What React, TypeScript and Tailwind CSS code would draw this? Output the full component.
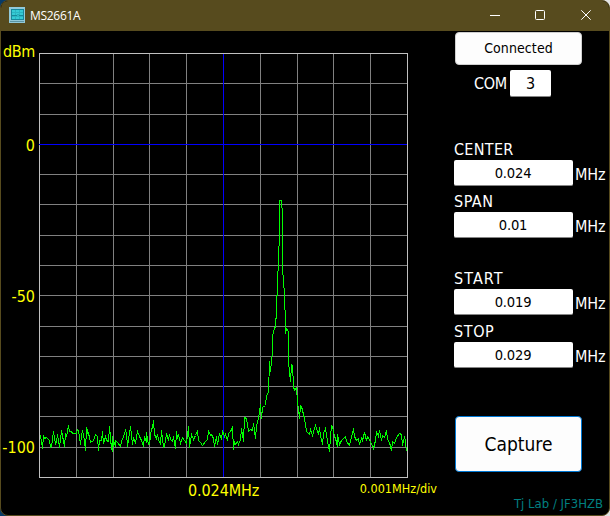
import React from 'react';

const vertical = [76, 113, 149, 186, 260, 297, 333, 370];
const horizontal = [83, 114, 174, 204, 235, 265, 295, 326, 356, 386, 416, 447];

type Segment = { x: number; y: number; data: string };

// Sweep data, in thirds of a pixel from each segment's origin.
const segments: Segment[] = [
  {
    x: 30, y: 400,
    data: '31,107 37,146 41,107 44,115 50,113 57,122 62,142 65,140 71,94 76,133 80,125 83,102 88,142 95,92 102,138 107,100 110,108 116,77 119,95 124,95 127,100 139,100 141,88 145,92 150,133 154,106 157,92 163,120 166,151 170,82 174,107 176,98 182,128 190,122 197,104 203,110 206,151 208,122 214,120 217,95 221,130 227,108 230,122 236,125 239,80 244,148 246,108 248,154 251,122 255,140 257,120 262,128 270,140 275,124 281,108 286,90 290,100 293,138 302,80 306,132 310,115 313,120 317,128 322,94 328,110 333,120 340,140 343,108 348,128 350,98 354,132 359,130 364,85 367,85',
  },
  {
    x: 150, y: 400,
    data: '10,62 14,104 20,115 22,102 26,118 31,132 35,92 41,142 44,140 50,100 54,120 58,104 62,118 67,124 70,110 76,145 79,95 82,115 85,104 91,130 97,112 103,120 110,130 115,80 118,142 124,104 130,118 135,106 141,92 146,120 152,128 158,136 167,124 172,118 176,92 180,106 185,102 190,116 193,140 199,110 202,134 207,100 213,118 217,90 222,110 227,102 231,122 236,100 242,95 246,82',
  },
  {
    x: 230, y: 310,
    data: '11,418 13,394 16,404 22,394 25,402 31,388 35,355 41,395 44,322 50,325 54,365 60,358 66,362 71,340 76,385 80,345 85,325 90,282 95,325 98,292 106,285 110,255 115,248 117,155 122,185 126,122 128,75 134,55 137,50',
  },
  {
    x: 230, y: 190,
    data: '137,386 139,384 139,316 142,315 142,244 145,242 145,168 148,166 149,31 153,31 154,52 157,55 157,254 160,256 160,292 163,295 163,358 166,360',
  },
  {
    x: 230, y: 310,
    data: '167,70 170,55 175,65 176,155 181,215 184,162 187,165 190,228 194,240 198,232 203,275 208,325 211,285 215,290 222,325 230,365 237,372 242,358 246,375 252,355 257,345 261,365 264,372 267,352 271,375 278,402 281,370 287,355 292,395',
  },
  {
    x: 270, y: 400,
    data: '178,155 181,110 185,75 188,78 192,108 195,115 202,140 203,104 208,132 214,122 225,110 228,125 238,136 243,112 250,84 254,108 258,120 264,115 268,132 273,115 278,122 284,98 290,122 293,108 301,125 310,145 316,120 320,95 325,108 329,92 334,122 338,106 344,112 349,92 353,118 359,128 364,150 368,124 374,130 380,112 387,100 394,104 398,135 403,110 407,125 410,155',
  },
];

const trace = segments
  .map(({ x, y, data }) =>
    data
      .split(' ')
      .map((pair) => {
        const [dx, dy] = pair.split(',').map(Number);
        return `${x + Math.floor(dx / 3) + 0.5},${y + Math.floor(dy / 3) + 0.5}`;
      })
      .join(' '),
  )
  .join(' ');

function Plot() {
  return (
    <svg width="369" height="425" viewBox="39 53 369 425" shapeRendering="crispEdges" fill="none" className="block">
      {vertical.map((x) => (
        <path key={x} d={`M${x + 0.5} 53V478`} stroke="#808080" />
      ))}
      {horizontal.map((y) => (
        <path key={y} d={`M39 ${y + 0.5}H408`} stroke="#808080" />
      ))}
      <rect x="39.5" y="53.5" width="368" height="424" stroke="#c0c0c0" />
      <path d="M223.5 54V477M39 144.5H407" stroke="#0000ff" />
      <polyline points={trace} stroke="#00ff00" />
    </svg>
  );
}

function Field({ label, value, tracking }: { label: string; value: string; tracking: string }) {
  return (
    <div>
      <div className={`h-5 text-[16px] leading-5 ${tracking}`}>{label}</div>
      <div className="flex h-[26px] gap-[2px]">
        <div className="h-[26px] w-[119px] rounded-[2px] border-b border-[#868686] bg-white pr-px text-center text-[14.6px] leading-[25px] tracking-[-0.2px] text-black">
          {value}
        </div>
        <div className="pt-[5px] text-[16px] leading-5 tracking-[-0.1px]">MHz</div>
      </div>
    </div>
  );
}

export default function App() {
  return (
    <div className="h-[516px] w-[610px] overflow-hidden bg-[linear-gradient(90deg,#073b68_0_50%,#e4e4e4_50%)]">
      <div className="flex h-[516px] flex-col overflow-hidden rounded-[8px] border border-[#574b1e] bg-black font-['DejaVu_Sans_Condensed','DejaVu_Sans',sans-serif] [font-stretch:condensed] whitespace-nowrap text-white">
        <header className="flex h-[30px] shrink-0 items-start bg-[#574b1e]">
          <svg width="16" height="16" viewBox="0 0 16 16" className="mt-[6px] ml-2">
            <rect width="16" height="16" fill="#91c9d9" />
            <rect x="2" y="2" width="13" height="11" fill="#16899c" />
            <rect x="3" y="3" width="11" height="9" fill="#35cbd5" />
            <path d="M3 5.5H14M3 9.5H14M6.5 3V12M10.5 3V12" stroke="#2bb5c2" />
            <path d="M3 8.5H8L9 7.5L10 8.5H14" stroke="#16899a" fill="none" />
            <path d="M1 14.5H15" stroke="#5b95a5" />
          </svg>
          <div className="mt-[6px] ml-[5px] font-['Open_Sans',sans-serif] text-[12px] leading-[17px] tracking-[-0.3px] [font-stretch:normal]">MS2661A</div>
          <svg width="120" height="30" viewBox="490 1 120 30" className="ml-auto" fill="none" stroke="white">
            <path d="M491 15.5H501" />
            <rect x="536.5" y="10.5" width="9" height="9" rx="1" />
            <path d="M582.3 10.3L591.7 19.7M591.7 10.3L582.3 19.7" />
          </svg>
        </header>

        <main className="flex min-h-0 flex-1">
          <div className="w-[437px] shrink-0 pt-[11px]">
            <div className="flex">
              <div className="flex w-[38px] shrink-0 flex-col items-end pr-1 text-[16px] leading-5 text-[#ffff00]">
                <div className="mb-[74px] tracking-[-0.35px]">dBm</div>
                <div className="mb-[131px]">0</div>
                <div className="mb-[131px]">-50</div>
                <div>-100</div>
              </div>
              <div className="pt-[11px]">
                <Plot />
              </div>
            </div>
            <div className="flex justify-between pl-[187px] text-[#ffff00]">
              <div className="pt-[3px] text-[16px] leading-5 tracking-[-0.1px]">0.024MHz</div>
              <div className="pt-[3px] pr-px text-[12.5px] leading-4 tracking-[0.03px]">0.001MHz/div</div>
            </div>
          </div>

          <div className="ml-4 flex flex-1 flex-col pt-px">
            <div className="ml-px h-[33px] w-[127px] rounded-[4px] border border-[#d0d0d0] bg-[#fdfdfd] text-center text-[14px] leading-[31px] tracking-[0.1px] text-black">
              Connected
            </div>
            <div className="mt-[5px] ml-5 flex h-[27px] gap-[2px]">
              <div className="w-[34px] text-[16px] leading-[28px] tracking-[-0.3px]">COM</div>
              <div className="w-[41px] rounded-[2px] border-b border-[#868686] bg-white text-center text-[16px] leading-[27px] text-black">3</div>
            </div>
            <div className="mt-[43px] flex flex-col gap-[6px]">
              <Field label="CENTER" value="0.024" tracking="tracking-[0.3px]" />
              <Field label="SPAN" value="0.01" tracking="tracking-[0.5px]" />
            </div>
            <div className="mt-[31px] flex flex-col gap-[7px]">
              <Field label="START" value="0.019" tracking="tracking-[1.1px]" />
              <Field label="STOP" value="0.029" tracking="tracking-[0.6px]" />
            </div>
            <div className="mt-12 ml-px h-14 w-[127px] rounded-[4px] border border-[#0078d4] bg-[#fdfdfd] text-center text-[19px] leading-[55px] text-black">
              Capture
            </div>
            <div className="mt-6 mr-[6px] text-right text-[13px] leading-4 text-[#008080]">Tj Lab / JF3HZB</div>
          </div>
        </main>
      </div>
    </div>
  );
}
